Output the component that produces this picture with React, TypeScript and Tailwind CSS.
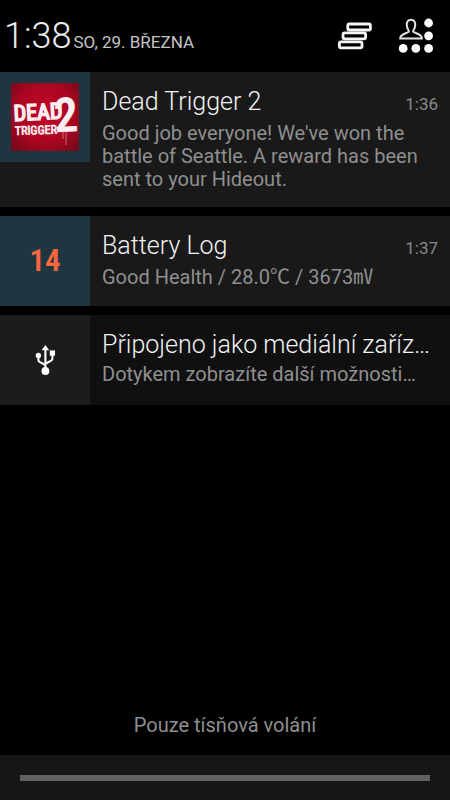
import type { ReactNode } from "react";

type Notification = {
  id: number;
  title: string;
  text: string;
  time?: string;
  icon: ReactNode;
  iconClass: string;
  cardClass: string;
};

function ClearAllIcon() {
  return (
    <svg viewBox="0 0 36 28" className="w-9 h-7" fill="none" stroke="#f5f5f5" strokeWidth="2.8" aria-hidden="true">
      <rect x="9.8" y="2" width="22.6" height="6" rx="1.6" />
      <rect x="5" y="10.9" width="22.6" height="6" rx="1.6" />
      <rect x="1.4" y="19.8" width="22.6" height="6" rx="1.6" />
    </svg>
  );
}

function QuickSettingsIcon() {
  return (
    <svg viewBox="0 0 36 36" className="size-9" aria-hidden="true">
      <path
        d="M2.2 20.6 C2.1 17.8 4 16.4 7.6 15.2 C9.8 14.5 11.2 14.2 10.8 12.8 C10.4 11.6 9 11 8.8 7.4 C8.6 3.6 10.2 1.7 13 1.7 C15.8 1.7 17.4 3.6 17.2 7.4 C17 11 15.6 11.6 15.2 12.8 C14.8 14.2 16.2 14.5 18.4 15.2 C22 16.4 24 17.8 23.9 20.6 Z"
        fill="none"
        stroke="#e2e2e2"
        strokeWidth="2"
      />
      <g fill="#fff">
        <circle cx="30.6" cy="5" r="4.4" />
        <circle cx="30.6" cy="17.8" r="4.4" />
        <circle cx="30.6" cy="30.4" r="4.4" />
        <circle cx="17.8" cy="30.4" r="4.4" />
        <circle cx="5.2" cy="30.4" r="4.4" />
      </g>
    </svg>
  );
}

function DeadTriggerLogo() {
  return (
    <svg viewBox="0 0 68 68" className="size-[68px]" aria-hidden="true">
      <defs>
        <radialGradient id="blood" cx="50%" cy="45%" r="70%">
          <stop offset="0" stopColor="#c3052a" />
          <stop offset="0.6" stopColor="#ab0622" />
          <stop offset="1" stopColor="#74091a" />
        </radialGradient>
      </defs>
      <rect width="68" height="68" rx="2" fill="url(#blood)" />
      <g
        fill="#fbeef0"
        stroke="#fbeef0"
        fontFamily="'Roboto Condensed', 'Liberation Sans Narrow', Roboto, sans-serif"
      >
        <text x="3" y="38" fontSize="22" fontWeight="400" strokeWidth="1.6" transform="rotate(-3 3 38)">
          DEAD
        </text>
        <text x="4" y="52" fontSize="12" fontWeight="400" strokeWidth="0.7" transform="rotate(-2 4 52)">
          TRIGGER
        </text>
        <text x="44" y="49" fontSize="47" fontWeight="500" strokeWidth="0.8" transform="rotate(-3 44 49)">
          2
        </text>
      </g>
      {/* paint drips under the 2 */}
      <path d="M52 49 V56 M55 49 V62" stroke="#f0b9c2" strokeWidth="0.8" opacity="0.7" />
    </svg>
  );
}

function UsbIcon() {
  return (
    <svg viewBox="0 0 20 30" className="w-5 h-[30px]" fill="none" stroke="#fff" strokeWidth="2.1" aria-hidden="true">
      <path d="M10.4 4 V26 M3.4 11 V15 Q3.4 16.3 4.6 16.9 L10.4 20 M17.4 8 V13.8 Q17.4 15 16.2 15.6 L10.4 18.7" />
      <path d="M10.4 0 L14.2 5.2 H6.6 Z" fill="#fff" stroke="none" />
      <circle cx="3.4" cy="10.4" r="2.7" fill="#fff" stroke="none" />
      <rect x="14.8" y="5.4" width="5.2" height="5.2" fill="#fff" stroke="none" />
      <circle cx="10.4" cy="26" r="3.9" fill="#fff" stroke="none" />
    </svg>
  );
}

const notifications: Notification[] = [
  {
    id: 1,
    title: "Dead Trigger 2",
    text: "Good job everyone! We've won the battle of Seattle. A reward has been sent to your Hideout.",
    time: "1:36",
    icon: <DeadTriggerLogo />,
    iconClass: "bg-[#1e3640]",
    cardClass: "bg-[#191919] min-h-[135px]",
  },
  {
    id: 2,
    title: "Battery Log",
    text: "Good Health / 28.0℃ / 3673㎷",
    time: "1:37",
    icon: (
      <span className="font-['Roboto_Condensed','Liberation_Sans_Narrow',Roboto,sans-serif] text-[31px] font-semibold text-[#f9663f]">
        14
      </span>
    ),
    iconClass: "bg-[#1e3640]",
    cardClass: "bg-[#191919]",
  },
  {
    id: 3,
    title: "Připojeno jako mediální zaříz…",
    text: "Dotykem zobrazíte další možnosti…",
    icon: <UsbIcon />,
    iconClass: "bg-[#1c1c1c]",
    cardClass: "bg-[#101010]",
  },
];

function NotificationCard({ item }: { item: Notification }) {
  return (
    <li className={`flex items-start ${item.cardClass}`}>
      <div className={`flex size-[90px] shrink-0 items-center justify-center ${item.iconClass}`}>
        {item.icon}
      </div>
      <div className="min-w-0 flex-1 pt-4 pr-3 pl-3">
        <div className="flex items-baseline gap-3">
          <h2 className="min-w-0 flex-1 text-[25px] leading-7 font-light text-[#f2f2f2]">{item.title}</h2>
          {item.time && <time className="text-[17px] leading-7 text-[#8a8a8a]">{item.time}</time>}
        </div>
        <p className="mt-1 text-[20px] leading-[23px] text-[#8f8f8f]">{item.text}</p>
      </div>
    </li>
  );
}

export default function App() {
  return (
    <div className="flex min-h-screen flex-col bg-black font-[Roboto,'Noto_Sans_CJK_JP',sans-serif]">
      <header className="flex h-[72px] items-center justify-between pr-4 pl-1">
        <div className="flex items-baseline gap-0.5">
          <time className="text-[36px] font-light text-[#ededed]">1:38</time>
          <span className="text-[17px] text-[#c4c4c4]">SO, 29. BŘEZNA</span>
        </div>
        <div className="flex items-center gap-6">
          <button type="button" aria-label="Vymazat oznámení">
            <ClearAllIcon />
          </button>
          <button type="button" aria-label="Rychlé nastavení">
            <QuickSettingsIcon />
          </button>
        </div>
      </header>

      <ul className="flex flex-1 flex-col gap-[9px]">
        {notifications.map((item) => (
          <NotificationCard key={item.id} item={item} />
        ))}
      </ul>

      <p className="pb-4 text-center text-[20px] leading-7 text-[#8f8f8f]">Pouze tísňová volání</p>

      <footer className="bg-[#161616] px-5 pt-5 pb-[19px]">
        <div className="h-1.5 bg-[#616161]" />
      </footer>
    </div>
  );
}
